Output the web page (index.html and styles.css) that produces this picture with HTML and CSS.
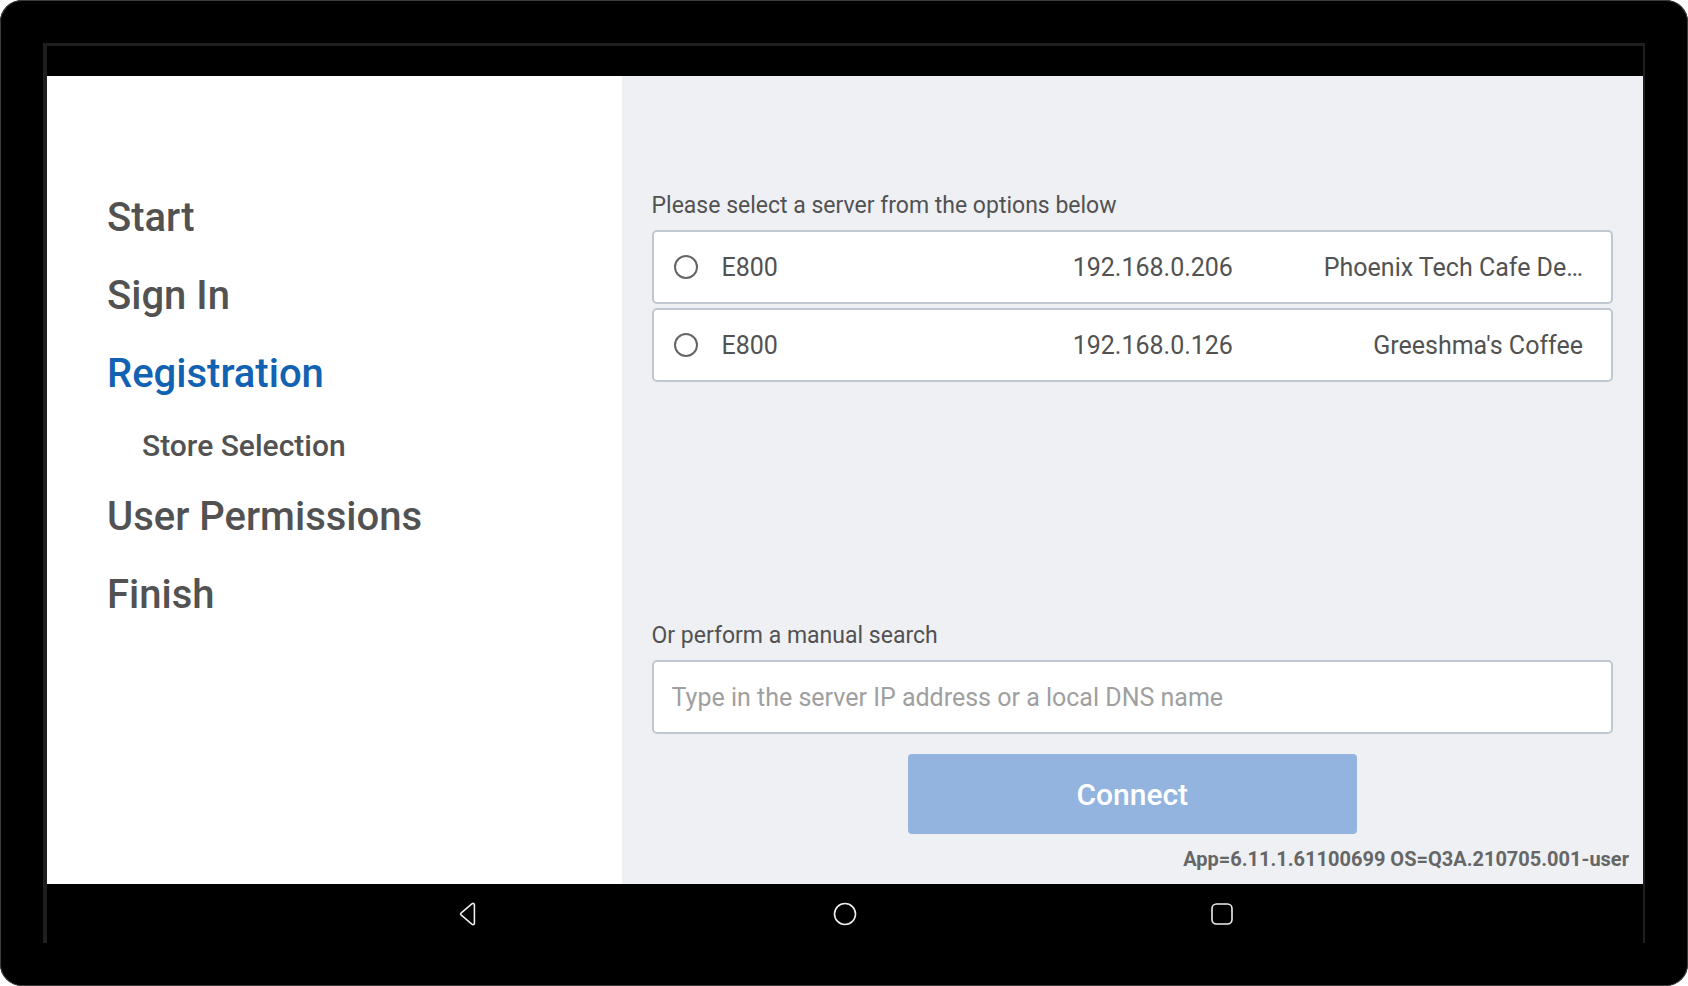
FILE: index.html
```html
<!DOCTYPE html>
<html lang="en">
<head>
<meta charset="utf-8">
<meta name="viewport" content="width=device-width, initial-scale=1">
<title>Registration</title>
<link rel="stylesheet" href="styles.css">
</head>
<body>
<div class="device">
  <div class="display">
    <div class="status-bar"></div>
    <div class="screen">
      <nav class="steps" aria-label="Setup steps">
        <ol class="step-list">
          <li class="step">Start</li>
          <li class="step">Sign In</li>
          <li class="step step-current" aria-current="step">Registration</li>
          <li class="step step-sub">Store Selection</li>
          <li class="step">User Permissions</li>
          <li class="step">Finish</li>
        </ol>
      </nav>
      <main class="panel">
        <form class="form">
          <fieldset class="servers">
            <legend class="caption">Please select a server from the options below</legend>
            <label class="server">
              <input class="radio" type="radio" name="server" value="192.168.0.206">
              <span class="server-model">E800</span>
              <span class="server-ip">192.168.0.206</span>
              <span class="server-name">Phoenix Tech Cafe De…</span>
            </label>
            <label class="server">
              <input class="radio" type="radio" name="server" value="192.168.0.126">
              <span class="server-model">E800</span>
              <span class="server-ip">192.168.0.126</span>
              <span class="server-name">Greeshma's Coffee</span>
            </label>
          </fieldset>
          <div class="manual">
            <label class="caption" for="address">Or perform a manual search</label>
            <input class="address" id="address" type="text" placeholder="Type in the server IP address or a local DNS name">
          </div>
          <button class="connect" type="submit" disabled>Connect</button>
        </form>
        <p class="version">App=6.11.1.61100699 OS=Q3A.210705.001-user</p>
      </main>
    </div>
    <div class="nav-bar">
      <button class="nav-button" type="button" aria-label="Back">
        <svg class="nav-icon" viewBox="0 0 26 26"><path d="M6.600 11.600 16.800 2.900Q18.800 1.600 19.400 3.600V22.400Q18.800 24.400 16.800 23.100L6.600 14.400Q4.500 13 6.600 11.600Z"/></svg>
      </button>
      <button class="nav-button" type="button" aria-label="Home">
        <svg class="nav-icon" viewBox="0 0 26 26"><circle cx="13" cy="13" r="10.500"/></svg>
      </button>
      <button class="nav-button" type="button" aria-label="Recent apps">
        <svg class="nav-icon" viewBox="0 0 26 26"><rect x="3" y="3" width="20" height="20" rx="4.500"/></svg>
      </button>
    </div>
  </div>
</div>
</body>
</html>
```
FILE: styles.css
```css
* {
  box-sizing: border-box;
}

body {
  margin: 0;
  background: #fff;
  color: #525252;
  font-family: Roboto, "Liberation Sans", sans-serif;
}

.device {
  display: flex;
  min-height: 100vh;
  padding: 43px;
  border-radius: 22px;
  background: #000;
  box-shadow: inset 0 0 0 1px #3c3c3c;
}

.display {
  flex: 1;
  display: flex;
  flex-direction: column;
  min-width: 0;
  border: solid #1f1f1f;
  border-width: 3px 2px 0 4px;
}

.status-bar {
  height: 30px;
}

.screen {
  flex: 1;
  display: grid;
  grid-template-columns: 36fr 64fr;
}

.steps {
  padding: 103px 60px 40px;
  background: #fff;
}

.step-list {
  margin: 0;
  padding: 0;
  list-style: none;
}

.step {
  font-size: 40px;
  font-weight: 500;
  line-height: 78px;
}

.step-current {
  color: #1262b3;
}

.step-sub {
  padding-left: 35px;
  font-size: 30px;
  line-height: 65px;
}

.panel {
  display: flex;
  flex-direction: column;
  padding: 114px 30px 11px;
  background: #eef0f4;
}

.form {
  flex: 1;
  display: flex;
  flex-direction: column;
}

.servers {
  display: flex;
  flex-direction: column;
  gap: 4px;
  min-width: 0;
  margin: 0;
  padding: 0;
  border: 0;
}

.caption {
  display: block;
  padding: 0 0 8px;
  font-size: 23px;
  line-height: 32px;
}

.server {
  display: grid;
  grid-template-columns: 24px 355fr 170fr 313fr;
  align-items: center;
  height: 74px;
  padding: 0 28px 0 20px;
  border: 2px solid #bfc8d1;
  border-radius: 5px;
  background: #fff;
  font-size: 25px;
}

.radio {
  appearance: none;
  width: 24px;
  height: 24px;
  margin: 0;
  border: 2px solid #656565;
  border-radius: 50%;
  background: #fff;
}

.radio:checked {
  border-color: #1262b3;
  box-shadow: inset 0 0 0 4px #fff;
  background: #1262b3;
}

.server-model {
  padding-left: 24px;
}

.server-name {
  text-align: right;
}

.manual {
  margin-top: auto;
}

.address {
  display: block;
  width: 100%;
  height: 74px;
  padding: 0 18px;
  border: 2px solid #bfc8d1;
  border-radius: 5px;
  background: #fff;
  color: #525252;
  font: inherit;
  font-size: 25px;
}

.address::placeholder {
  color: #a0a0a0;
  opacity: 1;
}

.connect {
  align-self: center;
  width: 449px;
  max-width: 100%;
  height: 80px;
  margin-top: 20px;
  padding: 0;
  border: 0;
  border-radius: 4px;
  background: #93b4df;
  color: #fff;
  font: inherit;
  font-size: 30px;
  font-weight: 500;
}

.version {
  margin: 11px -16px 0;
  color: #666;
  font-size: 20px;
  font-weight: 700;
  line-height: 28px;
  text-align: right;
}

.nav-bar {
  display: flex;
  justify-content: center;
  gap: 351px;
  height: 59px;
  padding-top: 17px;
}

.nav-button {
  width: 26px;
  height: 26px;
  padding: 0;
  border: 0;
  background: none;
}

.nav-icon {
  display: block;
  width: 26px;
  height: 26px;
  fill: none;
  stroke: #eee;
  stroke-width: 1.6;
}
```
